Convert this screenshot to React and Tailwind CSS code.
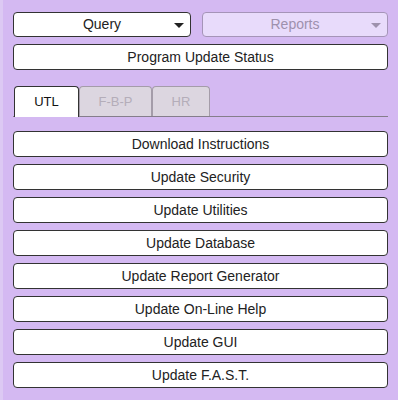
import React, { useState } from 'react';

const updates = [
    'Download Instructions',
    'Update Security',
    'Update Utilities',
    'Update Database',
    'Update Report Generator',
    'Update On-Line Help',
    'Update GUI',
    'Update F.A.S.T.',
];

const tabs = ['UTL', 'F-B-P', 'HR'];

const Caret = ({ className }) => (
    <svg width="10" height="6" viewBox="0 0 10 6" className={className}>
        <path d="M0 0 L10 0 L5 5 Z" fill="currentColor" />
    </svg>
);

const App = () => {
    const [tab, setTab] = useState('UTL');

    return (
        <div
            className="w-[398px] h-[400px] bg-[#d4b9f2] border-l-[3px] border-[#dcc9f3] pl-[10px] pr-[10px] pt-[12px]"
            style={{ fontFamily: '"Liberation Sans", Arial, sans-serif' }}
        >
            <div className="flex gap-[11px]">
                <button className="relative w-[178px] h-[25px] bg-white border border-[#333] rounded-[4px] text-[14px] text-[#222] flex items-center justify-center">
                    <span>Query</span>
                    <Caret className="absolute right-[6px] top-[10px] text-[#222]" />
                </button>
                <button
                    disabled
                    className="relative flex-1 h-[25px] bg-[#e8dbfb] border border-[#a594b8] rounded-[4px] text-[14px] text-[#9e91ad] flex items-center justify-center"
                >
                    <span>Reports</span>
                    <Caret className="absolute right-[6px] top-[10px] text-[#9e91ad]" />
                </button>
            </div>

            <button className="mt-[7px] w-full h-[26px] bg-white border border-[#333] rounded-[4px] text-[14px] text-[#222]">
                Program Update Status
            </button>

            <div className="mt-[16px] flex items-end pl-[1px] border-b border-[#857e8b]">
                {tabs.map(t => (
                    <button
                        key={t}
                        onClick={() => setTab(t)}
                        className={`rounded-t-[4px] text-[13px] border border-b-0 ${
                            t === 'UTL' ? 'w-[65px]' : t === 'F-B-P' ? 'w-[73px]' : 'w-[58px]'
                        } ${
                            tab === t
                                ? 'bg-white border-[#333] text-[#111] h-[31px] -mb-px'
                                : 'bg-[#dcd6e0] border-[#a49ca9] text-[#b4adb9] h-[30px]'
                        }`}
                    >
                        {t}
                    </button>
                ))}
            </div>

            <div className="mt-[14px] flex flex-col gap-[7px]">
                {updates.map(label => (
                    <button
                        key={label}
                        className="w-full h-[26px] bg-white border border-[#333] rounded-[4px] text-[14px] text-[#222]"
                    >
                        {label}
                    </button>
                ))}
            </div>
        </div>
    );
};

export default App;
